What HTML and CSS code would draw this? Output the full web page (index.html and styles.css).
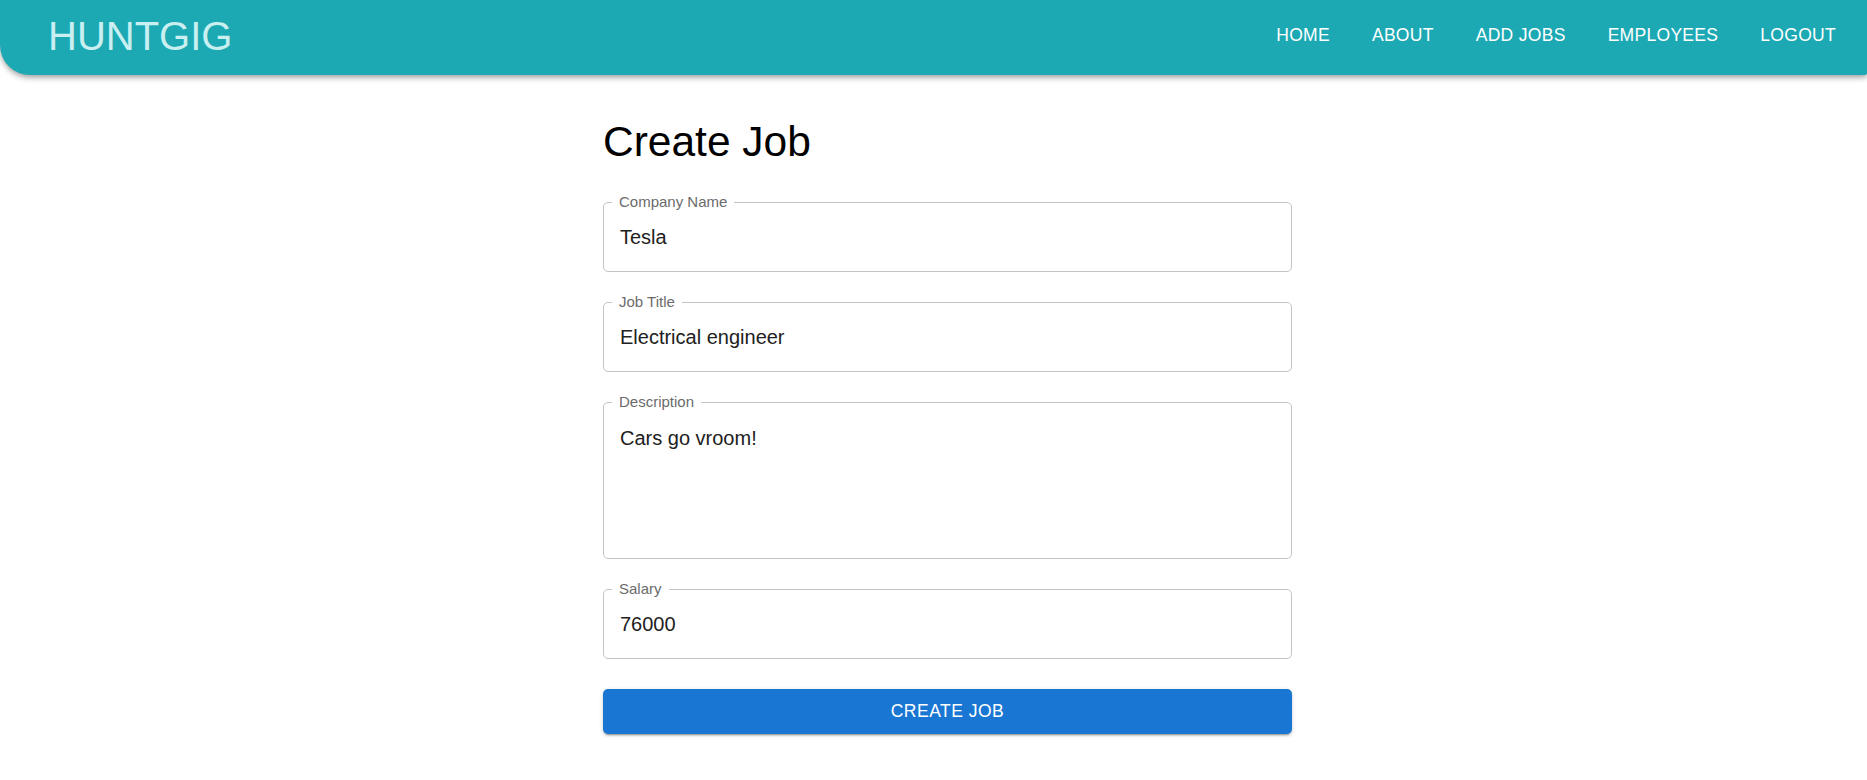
FILE: index.html
```html
<!DOCTYPE html>
<html lang="en">
<head>
<meta charset="utf-8">
<title>HuntGig - Create Job</title>
<link rel="stylesheet" href="styles.css">
</head>
<body>
<header class="appbar">
  <div class="brand">HUNTGIG</div>
  <nav class="nav">
    <a class="nav-link" href="#">HOME</a>
    <a class="nav-link" href="#">ABOUT</a>
    <a class="nav-link" href="#">ADD JOBS</a>
    <a class="nav-link" href="#">EMPLOYEES</a>
    <a class="nav-link" href="#">LOGOUT</a>
  </nav>
</header>
<main class="page">
  <form class="form">
    <h1 class="title">Create Job</h1>
    <div class="fields">
      <div class="field">
        <span class="label">Company Name</span>
        <input class="input" type="text" value="Tesla">
      </div>
      <div class="field">
        <span class="label">Job Title</span>
        <input class="input" type="text" value="Electrical engineer">
      </div>
      <div class="field">
        <span class="label">Description</span>
        <textarea class="input textarea" rows="4">Cars go vroom!</textarea>
      </div>
      <div class="field">
        <span class="label">Salary</span>
        <input class="input" type="text" value="76000">
      </div>
      <button class="submit" type="button">CREATE JOB</button>
    </div>
  </form>
</main>
</body>
</html>
```

FILE: styles.css
```css
* {
  box-sizing: border-box;
}

html, body {
  margin: 0;
  padding: 0;
  background: #ffffff;
}

body {
  font-family: "Liberation Sans", Arial, Helvetica, sans-serif;
  color: #000;
  width: 1867px;
  height: 780px;
  overflow: hidden;
}

.appbar {
  height: 75px;
  background: #1ca9b4;
  border-radius: 0 0 2px 30px;
  box-shadow: 0 2px 4px -1px rgba(0,0,0,0.2), 0 4px 5px 0 rgba(0,0,0,0.14), 0 1px 10px 0 rgba(0,0,0,0.12);
  display: flex;
  align-items: center;
  justify-content: space-between;
  padding: 0 31px 4px 48px;
}

.brand {
  font-size: 40px;
  line-height: 1;
  color: #c9eff1;
}

.nav {
  display: flex;
  align-items: center;
  gap: 42px;
}

.nav-link {
  color: #ffffff;
  text-decoration: none;
  font-size: 17.5px;
  letter-spacing: 0.3px;
  line-height: 1;
}

.page {
  display: flex;
  justify-content: center;
  padding-left: 28px;
}

.form {
  width: 689px;
  margin: 0;
}

.title {
  margin: 41px 0 34px;
  font-size: 42.5px;
  line-height: 52px;
  font-weight: 400;
  color: #000;
}

.fields {
  display: flex;
  flex-direction: column;
  gap: 30px;
}

.field {
  position: relative;
}

.label {
  position: absolute;
  top: -9px;
  left: 9px;
  padding: 0 7px;
  background: #ffffff;
  font-size: 15px;
  line-height: 18px;
  color: #6b6b6b;
}

.input {
  display: block;
  width: 100%;
  height: 70px;
  margin: 0;
  padding: 0 16px;
  border: 1px solid #c4c4c4;
  border-radius: 5px;
  font-family: "Liberation Sans", Arial, Helvetica, sans-serif;
  font-size: 20px;
  color: #212121;
  background: transparent;
  outline: none;
}

.textarea {
  height: 157px;
  padding: 20.6px 16px;
  line-height: 28.75px;
  resize: none;
  overflow: hidden;
}

.submit {
  height: 45px;
  width: 100%;
  border: none;
  border-radius: 5px;
  background: #1976d2;
  color: #ffffff;
  font-family: "Liberation Sans", Arial, Helvetica, sans-serif;
  font-size: 17.5px;
  letter-spacing: 0.5px;
  box-shadow: 0 3px 1px -2px rgba(0,0,0,0.2), 0 2px 2px 0 rgba(0,0,0,0.14), 0 1px 5px 0 rgba(0,0,0,0.12);
  cursor: pointer;
}
```
